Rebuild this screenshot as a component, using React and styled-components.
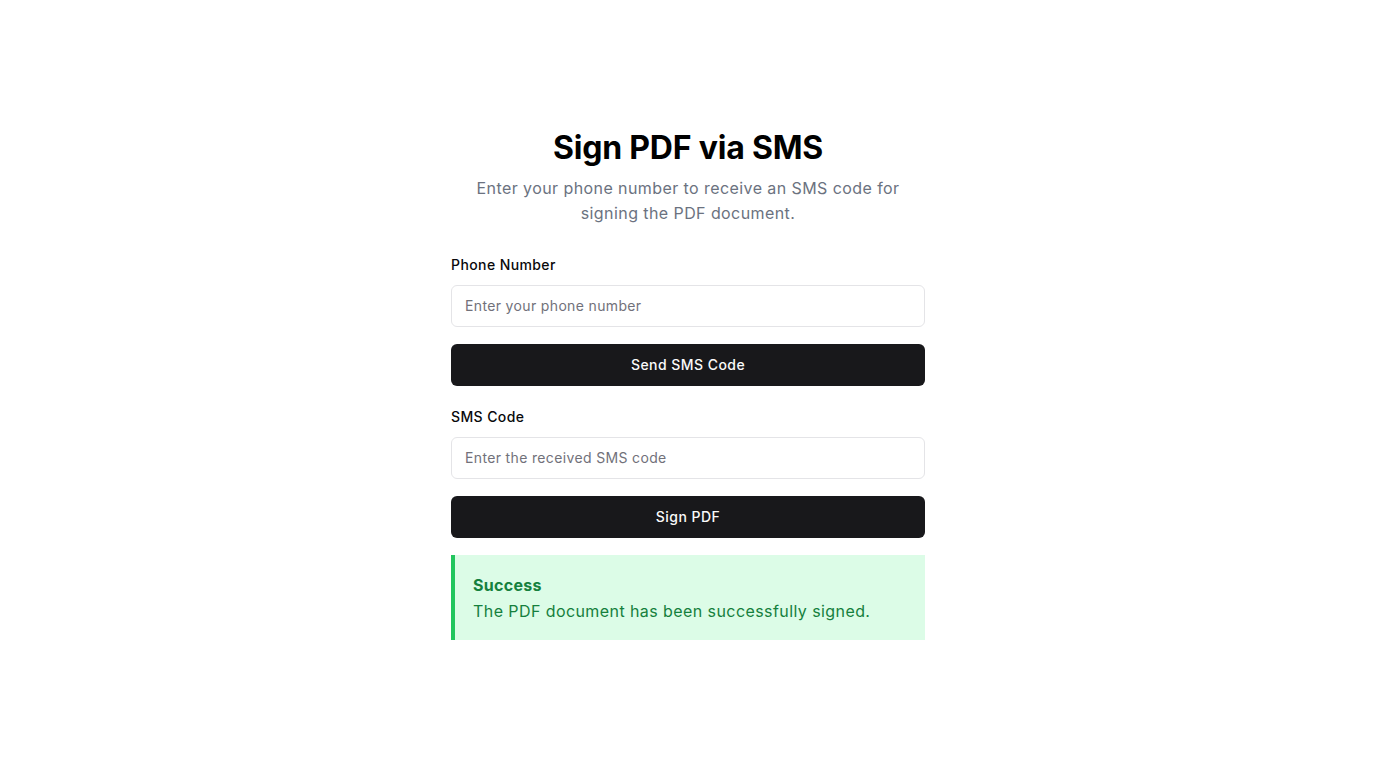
import React from "react";
import styled, { createGlobalStyle } from "styled-components";

const GlobalStyle = createGlobalStyle`
  * { box-sizing: border-box; }
  body {
    margin: 0;
    background: #ffffff;
    font-family: Inter, "Noto Sans", sans-serif;
    color: #09090b;
  }
`;

const Page = styled.div`
  min-height: 100vh;
  display: flex;
  align-items: center;
  justify-content: center;
`;

const Card = styled.div`
  width: 474px;
  display: flex;
  flex-direction: column;
`;

const Header = styled.div`
  text-align: center;
  margin-bottom: 29px;
`;

const Title = styled.h1`
  margin: 0 0 9px;
  font-size: 32px;
  line-height: 38px;
  font-weight: 700;
  color: #000;
  letter-spacing: -0.2px;
`;

const Subtitle = styled.p`
  margin: 0 auto;
  max-width: 460px;
  font-size: 16px;
  line-height: 25px;
  letter-spacing: 0.42px;
  color: #6b7280;
`;

const Field = styled.div`
  display: flex;
  flex-direction: column;
  gap: 10px;
`;

const Label = styled.label`
  font-size: 14px;
  line-height: 20px;
  font-weight: 500;
  letter-spacing: 0.4px;
  color: #09090b;
`;

const Input = styled.input`
  height: 42px;
  padding: 0 13px;
  border: 1px solid #e4e4e7;
  border-radius: 6px;
  font-family: inherit;
  font-size: 14px;
  letter-spacing: 0.35px;
  color: #09090b;
  outline: none;
  &::placeholder {
    color: #71717a;
  }
`;

const Button = styled.button`
  height: 42px;
  margin-top: 17px;
  margin-bottom: ${(p) => p.$mb || 0}px;
  border: none;
  border-radius: 6px;
  background: #18181b;
  color: #fafafa;
  font-family: inherit;
  font-size: 14px;
  font-weight: 500;
  letter-spacing: 0.45px;
  cursor: pointer;
`;

const Alert = styled.div`
  background: #dcfce7;
  border-left: 4px solid #22c55e;
  padding: 18px 20px 17px 18px;
  color: #15803d;
`;

const AlertTitle = styled.div`
  font-size: 16px;
  line-height: 24px;
  font-weight: 700;
  letter-spacing: 0.3px;
  margin-bottom: 2px;
`;

const AlertText = styled.div`
  font-size: 16px;
  line-height: 24px;
  letter-spacing: 0.42px;
`;

export default function App() {
  return (
    <>
      <GlobalStyle />
      <Page>
        <Card>
          <Header>
            <Title>Sign PDF via SMS</Title>
            <Subtitle>
              Enter your phone number to receive an SMS code for signing the PDF
              document.
            </Subtitle>
          </Header>
          <Field>
            <Label>Phone Number</Label>
            <Input placeholder="Enter your phone number" />
          </Field>
          <Button $mb={21}>Send SMS Code</Button>
          <Field>
            <Label>SMS Code</Label>
            <Input placeholder="Enter the received SMS code" />
          </Field>
          <Button $mb={17}>Sign PDF</Button>
          <Alert>
            <AlertTitle>Success</AlertTitle>
            <AlertText>The PDF document has been successfully signed.</AlertText>
          </Alert>
        </Card>
      </Page>
    </>
  );
}
